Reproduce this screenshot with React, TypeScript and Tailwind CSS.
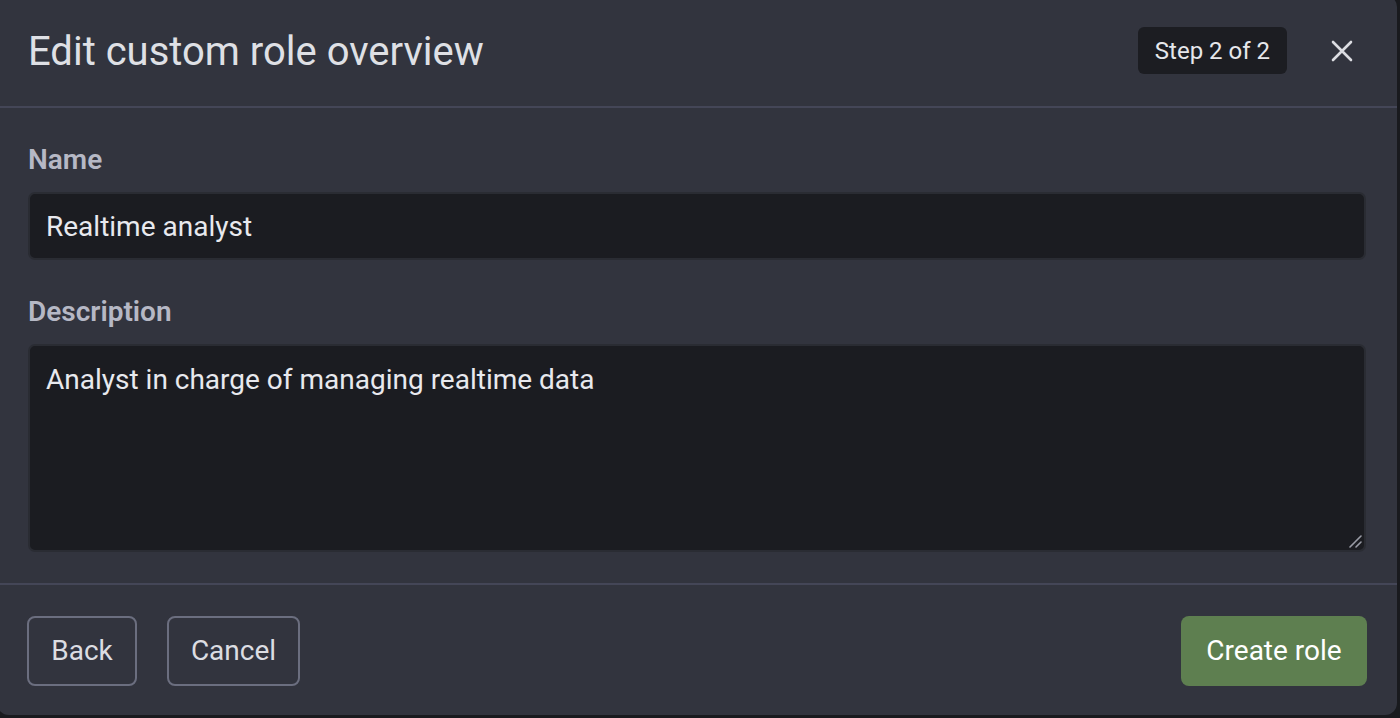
import React from "react";

export default function App() {
  return (
    <div
      className="h-[718px] w-[1400px] overflow-hidden bg-[#191a1e]"
      style={{ fontFamily: "Roboto, 'Liberation Sans', sans-serif" }}
    >
      <div className="ml-[-3px] mt-[-5px] flex h-[720px] w-[1400px] flex-col rounded-[12px] bg-[#32343e]">
        {/* Header */}
        <div className="flex h-[111px] items-center pl-[31px] pr-[44px]">
          <h1 className="flex-1 pt-[2px] text-[40px] font-normal leading-[48px] text-[#dfe0e5]">
            Edit custom role overview
          </h1>
          <div className="flex h-[47px] items-center rounded-[6px] bg-[#1c1d22] px-[17px] text-[24px] leading-[30px] text-[#e6e7eb]">
            Step 2 of 2
          </div>
          <button className="ml-[44px] flex h-[22px] w-[22px] items-center justify-center">
            <svg width="22" height="22" viewBox="0 0 22 22" fill="none">
              <path d="M2 2 L20 20 M20 2 L2 20" stroke="#dcdde2" strokeWidth="2.6" strokeLinecap="round" />
            </svg>
          </button>
        </div>
        <div className="h-[2px] bg-[#444657]" />

        {/* Body */}
        <div className="flex flex-col px-[31px] pb-[31px] pt-[34px]">
          <label className="mb-[14px] text-[28px] font-semibold leading-[36px] text-[#b6b8c5]">Name</label>
          <input
            readOnly
            value="Realtime analyst"
            className="h-[68px] w-full rounded-[7px] border-2 border-[#2a2c33] bg-[#1b1c21] px-[16px] text-[28px] text-[#e8e9ee] outline-none"
            style={{ fontFamily: "Roboto, 'Liberation Sans', sans-serif" }}
          />
          <label className="mb-[14px] mt-[34px] text-[28px] font-semibold leading-[36px] text-[#b6b8c5]">
            Description
          </label>
          <div className="relative">
            <textarea
              readOnly
              defaultValue="Analyst in charge of managing realtime data"
              className="block h-[208px] w-full resize-none rounded-[7px] border-2 border-[#2a2c33] bg-[#1b1c21] px-[16px] py-[16px] text-[28px] leading-[36px] text-[#e8e9ee] outline-none"
              style={{ fontFamily: "Roboto, 'Liberation Sans', sans-serif" }}
            />
            <svg
              className="pointer-events-none absolute bottom-[4px] right-[4px]"
              width="14"
              height="14"
              viewBox="0 0 14 14"
              fill="none"
            >
              <path d="M2 13 L13 2 M8 13 L13 8" stroke="#9a9ca6" strokeWidth="1.6" strokeLinecap="round" />
            </svg>
          </div>
        </div>
        <div className="h-[2px] bg-[#444657]" />

        {/* Footer */}
        <div className="flex items-center px-[30px] pt-[31px]">
          <div className="flex gap-[30px]">
            <button className="h-[70px] w-[110px] rounded-[8px] border-2 border-[#6b6e7f] text-[28px] text-[#dcdde2]">
              Back
            </button>
            <button className="h-[70px] w-[133px] rounded-[8px] border-2 border-[#6b6e7f] text-[28px] text-[#dcdde2]">
              Cancel
            </button>
          </div>
          <div className="flex-1" />
          <button className="h-[70px] w-[186px] rounded-[8px] bg-[#5e7f50] text-[28px] text-white">
            Create role
          </button>
        </div>
      </div>
    </div>
  );
}
